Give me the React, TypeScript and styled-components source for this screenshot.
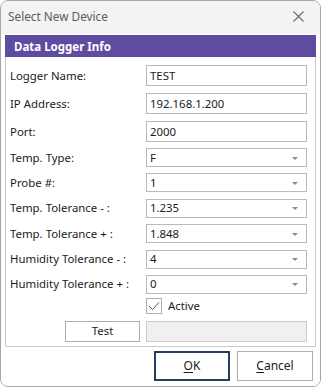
import { FC } from 'react';
import styled, { createGlobalStyle } from 'styled-components';

const GlobalStyle = createGlobalStyle`
  html, body {
    margin: 0;
    padding: 0;
    background: #ffffff;
  }
  * {
    box-sizing: border-box;
  }
`;

const WindowStyled = styled.div`
  width: 321px;
  height: 387px;
  display: flex;
  flex-direction: column;
  border: 1px solid #a6a6a6;
  border-radius: 8px;
  overflow: hidden;
  background: #ffffff;
  font-family: 'Noto Sans', 'Open Sans', sans-serif;
  font-size: 11.4px;
  color: #1a1a1a;
`;

const TitleBar = styled.div`
  height: 33px;
  flex: none;
  display: flex;
  align-items: center;
  justify-content: space-between;
  padding: 0 16px 3px 7px;
  background: #f3f3f3;
  color: #5c5c5c;
  font-size: 11.8px;
`;

const Body = styled.div`
  flex: 1;
  display: flex;
  flex-direction: column;
  padding: 1px 4px 0 4px;
  background: #ffffff;
`;

const Panel = styled.div`
  border: 1px solid #c9c9c9;
  border-top: none;
  display: flex;
  flex-direction: column;
`;

const PanelHeader = styled.div`
  height: 22px;
  margin: 0 -1px;
  display: flex;
  align-items: center;
  padding-left: 9px;
  background: #5f4b9f;
  color: #ffffff;
  font-weight: bold;
  font-size: 11.5px;
`;

const Form = styled.div`
  display: flex;
  flex-direction: column;
  padding: 8px 8px 4px 4px;
`;

const Row = styled.div<{ $height: number; $gap: number }>`
  display: grid;
  grid-template-columns: 136px 1fr;
  align-items: center;
  height: ${(p) => p.$height}px;
  margin-bottom: ${(p) => p.$gap}px;
`;

const Label = styled.span`
  white-space: nowrap;
  padding-bottom: 1px;
`;

const Field = styled.div<{ $disabled?: boolean }>`
  height: 100%;
  display: flex;
  align-items: center;
  justify-content: space-between;
  padding: 0 8px 1px 3px;
  border: 1px solid ${(p) => (p.$disabled ? '#cccccc' : '#b9b9b9')};
  background: ${(p) => (p.$disabled ? '#f0f0f0' : '#ffffff')};
`;

const Arrow = styled.span`
  width: 0;
  height: 0;
  border-left: 3px solid transparent;
  border-right: 3px solid transparent;
  border-top: 3px solid #8a8a8a;
  margin-top: 2px;
`;

const CheckRow = styled.div`
  display: flex;
  align-items: center;
  gap: 6px;
`;

const CheckBox = styled.span`
  width: 16px;
  height: 16px;
  border: 1px solid #adadad;
  display: flex;
  align-items: center;
  justify-content: center;
  background: #ffffff;
`;

const TestButton = styled.div`
  justify-self: end;
  width: 75px;
  height: 100%;
  margin-right: 6px;
  display: flex;
  align-items: center;
  justify-content: center;
  border: 1px solid #adadad;
  background: #ffffff;
  padding-bottom: 1px;
`;

const Footer = styled.div`
  display: flex;
  justify-content: flex-end;
  gap: 7px;
  padding: 4px 3px 0 0;
`;

const DialogButton = styled.div<{ $primary?: boolean }>`
  width: 76px;
  height: 30px;
  display: flex;
  align-items: center;
  justify-content: center;
  border: ${(p) => (p.$primary ? '2px solid #243d61' : '1px solid #adadad')};
  background: #ffffff;
  font-size: 12px;
  padding-bottom: 1px;
  u {
    text-underline-offset: 2px;
  }
`;

interface FieldDef {
  label: string;
  value: string;
  combo?: boolean;
}

const fields: FieldDef[] = [
  { label: 'Logger Name:', value: 'TEST' },
  { label: 'IP Address:', value: '192.168.1.200' },
  { label: 'Port:', value: '2000' },
  { label: 'Temp. Type:', value: 'F', combo: true },
  { label: 'Probe #:', value: '1', combo: true },
  { label: 'Temp. Tolerance - :', value: '1.235', combo: true },
  { label: 'Temp. Tolerance + :', value: '1.848', combo: true },
  { label: 'Humidity Tolerance - :', value: '4', combo: true },
  { label: 'Humidity Tolerance + :', value: '0', combo: true },
];

const CloseIcon: FC = () => (
  <svg width="11" height="11" viewBox="0 0 11 11">
    <path d="M0.5 0.5 L10.5 10.5 M10.5 0.5 L0.5 10.5" stroke="#6b6b6b" strokeWidth="1.1" />
  </svg>
);

const CheckIcon: FC = () => (
  <svg width="12" height="10" viewBox="0 0 12 10">
    <path d="M1 5 L4.5 8.5 L11 1.5" stroke="#555" strokeWidth="1" fill="none" />
  </svg>
);

export default function App() {
  return (
    <>
      <GlobalStyle />
      <WindowStyled>
        <TitleBar>
          <span>Select New Device</span>
          <CloseIcon />
        </TitleBar>
        <Body>
          <Panel>
            <PanelHeader>Data Logger Info</PanelHeader>
            <Form>
              {fields.map((f, i) => (
                <Row
                  key={f.label}
                  $height={f.combo ? 19 : 21}
                  $gap={i < 2 ? 7 : i === 2 ? 6 : i === fields.length - 1 ? 4 : 6.4}
                >
                  <Label>{f.label}</Label>
                  <Field>
                    <span>{f.value}</span>
                    {f.combo && <Arrow />}
                  </Field>
                </Row>
              ))}
              <Row $height={16} $gap={7}>
                <span />
                <CheckRow>
                  <CheckBox>
                    <CheckIcon />
                  </CheckBox>
                  <span>Active</span>
                </CheckRow>
              </Row>
              <Row $height={21} $gap={0}>
                <TestButton>Test</TestButton>
                <Field $disabled />
              </Row>
            </Form>
          </Panel>
          <Footer>
            <DialogButton $primary>
              <span>
                <u>O</u>K
              </span>
            </DialogButton>
            <DialogButton>
              <span>
                <u>C</u>ancel
              </span>
            </DialogButton>
          </Footer>
        </Body>
      </WindowStyled>
    </>
  );
}
